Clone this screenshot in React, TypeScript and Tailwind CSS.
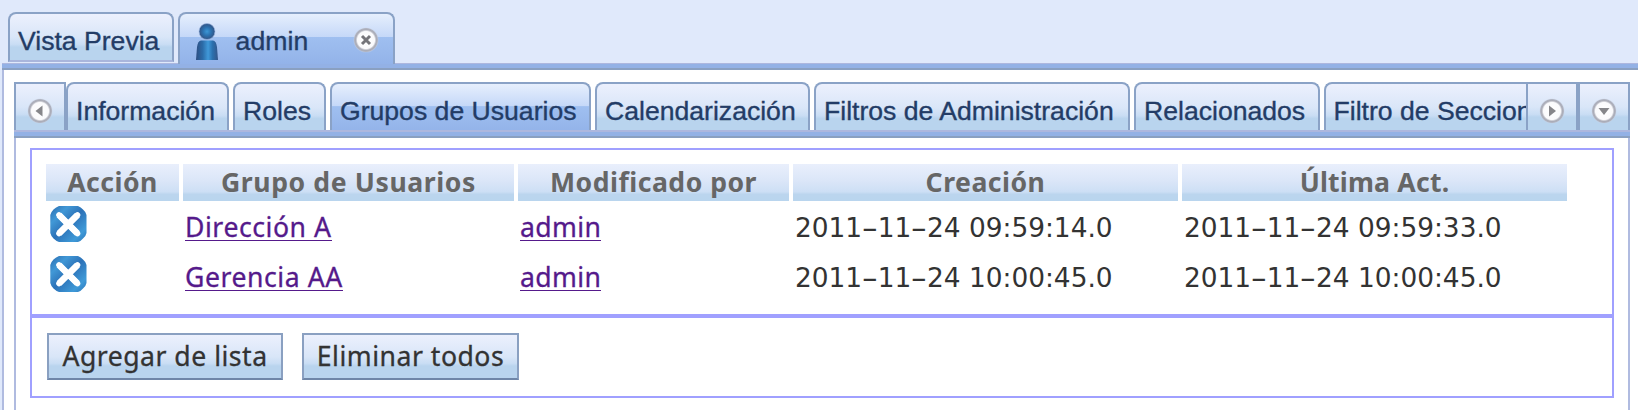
import React, { useId } from "react";

const tabText = "font-['Liberation_Sans',Arial,sans-serif] text-[26.6px] leading-[30px] text-[#233c66] whitespace-nowrap [-webkit-text-stroke:0.35px_#233c66]";
const bodyFont = "font-['Noto_Sans','Open_Sans',sans-serif]";
const idleFill = "bg-[linear-gradient(to_bottom,#ecf0fd_0%,#d9e6f8_50%,#c9ddf4_66%,#b9d4ee_72%,#b9d4ee_100%)]";
const activeFill = "bg-[linear-gradient(to_bottom,#e6effd_0%,#c5d8f8_46%,#9fbff0_47%,#93b3e9_100%)]";
const headFill = "bg-[linear-gradient(to_bottom,#e9effc_0%,#dbe6f8_45%,#cddff5_75%,#bbd5ee_82%,#b9d5ee_100%)]";

const innerTabs = [
  { label: "Información", width: "w-[163px]" },
  { label: "Roles", width: "w-[93px]" },
  { label: "Grupos de Usuarios", width: "w-[261px]", active: true },
  { label: "Calendarización", width: "w-[215px]" },
  { label: "Filtros de Administración", width: "w-[316px]" },
  { label: "Relacionados", width: "w-[186px]" },
];

const columns = [
  { label: "Acción", spacing: "tracking-[0.5px]" },
  { label: "Grupo de Usuarios", spacing: "tracking-[0.6px]" },
  { label: "Modificado por", spacing: "tracking-[0.5px]" },
  { label: "Creación", spacing: "tracking-[0.5px]" },
  { label: "Última Act.", spacing: "tracking-[0.2px]" },
];

const rows = [
  { group: "Dirección A", by: "admin", created: "2011-11-24 09:59:14.0", updated: "2011-11-24 09:59:33.0" },
  { group: "Gerencia AA", by: "admin", created: "2011-11-24 10:00:45.0", updated: "2011-11-24 10:00:45.0" },
];

function RoundIcon({ kind }: { kind: "close" | "left" | "right" | "down" }) {
  const id = useId();
  return (
    <svg width="26" height="26" viewBox="0 0 26 26" className="block shrink-0">
      <defs>
        <radialGradient id={id}>
          <stop offset="0" stopColor="#ffffff" />
          <stop offset="0.68" stopColor="#fafafc" />
          <stop offset="0.82" stopColor="#a9abb6" />
          <stop offset="0.91" stopColor="#b0b3c0" />
          <stop offset="1" stopColor="#c9d3e4" stopOpacity="0.3" />
        </radialGradient>
      </defs>
      <circle cx="13" cy="13" r="12.6" fill={`url(#${id})`} />
      {kind === "close" && <path d="M9 9l8 8M17 9l-8 8" stroke="#75757a" strokeWidth="3" />}
      {kind === "left" && <path d="M15.5 7.5v11l-7-5.5z" fill="#86868a" />}
      {kind === "right" && <path d="M10 7.5v11l7-5.5z" fill="#86868a" />}
      {kind === "down" && <path d="M7.5 10h11L13 17z" fill="#86868a" />}
    </svg>
  );
}

function PersonIcon() {
  return (
    <svg width="24" height="38" viewBox="0 0 24 38" className="block shrink-0">
      <defs>
        <radialGradient id="head">
          <stop offset="0" stopColor="#3c97d6" />
          <stop offset="0.5" stopColor="#2c72b0" />
          <stop offset="1" stopColor="#315384" />
        </radialGradient>
        <linearGradient id="torso">
          <stop offset="0" stopColor="#2f4f82" />
          <stop offset="0.3" stopColor="#2b6ba8" />
          <stop offset="0.55" stopColor="#4099d9" />
          <stop offset="0.75" stopColor="#2b70ae" />
          <stop offset="1" stopColor="#35568a" />
        </linearGradient>
      </defs>
      <path d="M1 37L2 24Q3 17.500 6 17.500H18Q21 17.500 22 24L23 37z" fill="url(#torso)" />
      <circle cx="12" cy="8.500" r="8" fill="url(#head)" stroke="#9db9e4" strokeWidth="0.6" />
    </svg>
  );
}

function DeleteIcon() {
  const id = useId();
  return (
    <svg width="37" height="36" viewBox="0 0 37 36" className="block">
      <defs>
        <linearGradient id={id} x1="0" y1="0" x2="1" y2="1">
          <stop offset="0" stopColor="#2a6cb0" />
          <stop offset="0.25" stopColor="#4198d6" />
          <stop offset="0.5" stopColor="#2c72b8" />
          <stop offset="0.8" stopColor="#3f9ad8" />
          <stop offset="1" stopColor="#2d76ba" />
        </linearGradient>
      </defs>
      <path d="M9 0H28Q31 1 33 3.500Q36 6 36.500 9V27Q36 30 33 32.500Q31 35 28 36H9Q6 35 3.500 32.500Q1 30 0.300 27V9Q1 6 3.500 3.500Q6 1 9 0z" fill={`url(#${id})`} />
      <path d="M9 9L27.500 27.500M27.500 9L9 27.500" stroke="#fff" strokeWidth="6.600" strokeLinecap="butt" />
      <path d="M9 9L27.500 27.500M27.500 9L9 27.500" stroke="#fff" strokeWidth="5.600" strokeLinecap="round" />
    </svg>
  );
}

function Stamp({ value }: { value: string }) {
  const parts = value.split("-");
  return (
    <span className="font-['DejaVu_Sans',sans-serif] text-[26.4px] text-[#333]">
      {parts.map((part, i) => (
        <React.Fragment key={i}>
          {i > 0 && <span className="inline-block w-[15.6px] scale-x-[1.75] text-center">-</span>}
          {part}
        </React.Fragment>
      ))}
    </span>
  );
}

function Link({ children, spacing }: { children: string; spacing: string }) {
  return (
    <a href="#" className={`block h-[35px] w-fit border-b border-[#551a8b] leading-[42px] whitespace-nowrap text-[#551a8b] [-webkit-text-stroke:0.3px_#551a8b] ${spacing}`}>
      {children}
    </a>
  );
}

function OuterTabs() {
  return (
    <div className="flex h-[63px] pl-2 pt-3">
      <div className={`mr-1 h-[50px] w-[166px] rounded-t-lg border-2 border-[#8aa2c6] border-b-[#a9b5dc] pl-2 pt-[12px] ${idleFill}`}>
        <span className={`${tabText} block`}>Vista Previa</span>
      </div>
      <div className={`flex h-[52px] w-[217px] rounded-t-lg border-2 border-b-0 border-[#8aa2c6] pl-[14.500px] ${activeFill}`}>
        <div className="pt-[9px]"><PersonIcon /></div>
        <span className={`${tabText} ml-[17px] mt-[12px] tracking-[0.1px]`}>admin</span>
        <div className="ml-auto mr-[14px] mt-[12.500px]"><RoundIcon kind="close" /></div>
      </div>
    </div>
  );
}

function InnerTabs() {
  const scroller = `flex h-[48px] w-[52px] shrink-0 justify-center border-2 border-b-0 border-[#8aa2c6] pt-[14px] ${idleFill}`;
  return (
    <div className="w-[1616px]">
      <div className="flex h-[48px]">
        <div className={scroller}><RoundIcon kind="left" /></div>
        <div className="flex w-[1461px] gap-1 overflow-hidden">
          {innerTabs.map((tab) => (
            <div
              key={tab.label}
              className={`h-[50px] shrink-0 rounded-t-lg border-2 border-b-0 border-[#8aa2c6] pl-[8px] pt-[11.500px] ${tab.width} ${tab.active ? activeFill : idleFill}`}
            >
              <span className={`${tabText} block`}>{tab.label}</span>
            </div>
          ))}
          <div className={`h-[50px] w-[240px] shrink-0 rounded-tl-lg border-2 border-b-0 border-r-0 border-[#8aa2c6] pl-[7.500px] pt-[11.500px] ${idleFill}`}>
            <span className={`${tabText} block`}>Filtro de Secciones</span>
          </div>
        </div>
        <div className={scroller}><RoundIcon kind="right" /></div>
        <div className={scroller}><RoundIcon kind="down" /></div>
      </div>
      <div className="h-2 border-b-2 border-t-2 border-b-[#8aa0c1] border-t-[#adb7de] bg-[#93b1e5]" />
    </div>
  );
}

function GroupTable() {
  const grid = "grid grid-cols-[133px_331px_271px_385px_385px] gap-x-1";
  return (
    <div className={`${bodyFont} h-[166px] pl-[14px] pt-[14px] text-[26.6px]`}>
      <div className={`${grid} h-[36px] font-bold text-[#666]`}>
        {columns.map((c) => (
          <div key={c.label} className={`text-center leading-[37px] whitespace-nowrap ${headFill}`}>
            <span className={c.spacing}>{c.label}</span>
          </div>
        ))}
      </div>
      {rows.map((r, i) => (
        <div key={i} className={`${grid} h-[50px]`}>
          <div className="pl-1 pt-[6px]"><DeleteIcon /></div>
          <div className="pl-[2px] pt-[6px]"><Link spacing="tracking-[0.55px]">{r.group}</Link></div>
          <div className="pl-[2px] pt-[6px]"><Link spacing="tracking-[0.4px]">{r.by}</Link></div>
          <div className="pl-[2px] pt-[8px] leading-[38px]"><Stamp value={r.created} /></div>
          <div className="pl-[2px] pt-[8px] leading-[38px]"><Stamp value={r.updated} /></div>
        </div>
      ))}
    </div>
  );
}

function ActionButton({ label, width, spacing }: { label: string; width: string; spacing: string }) {
  return (
    <button className={`${bodyFont} h-[47px] border-2 border-[#8aa0c1] border-b-[#6f86a8] text-center text-[26.6px] leading-[43px] whitespace-nowrap text-[#333] [-webkit-text-stroke:0.3px_#333] ${idleFill} ${width} ${spacing}`}>
      {label}
    </button>
  );
}

export default function App() {
  return (
    <div className="h-[410px] w-[1638px] overflow-hidden bg-[#e0e9fb]">
      <OuterTabs />
      <div className="ml-[2px] h-[7px] border-b-2 border-t border-b-[#8aa0c1] border-t-[#adb7de] bg-[#93b1e5]" />
      <div className="ml-[2px] h-[340px] border-l-2 border-[#b0bbe0] bg-white pl-[10px] pt-[12px]">
        <InnerTabs />
        <div className="h-[280px] w-[1616px] border-x-2 border-[#b0bbe0] px-[14px] pt-[10px]">
          <div className="h-[250px] border-2 border-[#a0a0ff]">
            <GroupTable />
            <div className="-mt-[2px] h-1 bg-[#a0a0ff]" />
            <div className="flex gap-[19px] pl-[15px] pt-[15px]">
              <ActionButton label="Agregar de lista" width="w-[236px]" spacing="tracking-[0.5px]" />
              <ActionButton label="Eliminar todos" width="w-[217px]" spacing="tracking-[0.5px]" />
            </div>
          </div>
        </div>
      </div>
    </div>
  );
}
